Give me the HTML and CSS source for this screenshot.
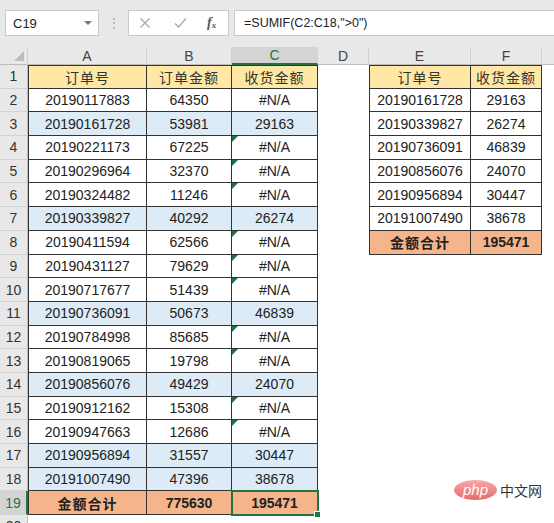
FILE: index.html
```html
<!DOCTYPE html>
<html>
<head>
<meta charset="utf-8">
<link rel="stylesheet" href="styles.css">
</head>
<body>
<div class="app">
  <div class="fbar">
    <div class="namebox"><span>C19</span><span class="dd"></span></div>
    <div class="sep">⋮</div>
    <div class="btns">
      <svg class="ic" width="12" height="12" viewBox="0 0 12 12"><path d="M1.5 1.5 L10.5 10.5 M10.5 1.5 L1.5 10.5" stroke="#a8a8a8" stroke-width="1.2" fill="none"/></svg>
      <svg class="ic ok" width="13" height="12" viewBox="0 0 13 12"><path d="M1 6.5 L4.5 10 L12 1.5" stroke="#a8a8a8" stroke-width="1.2" fill="none"/></svg>
      <span class="fx">f<sub>x</sub></span>
    </div>
    <div class="formula">=SUMIF(C2:C18,"&gt;0")</div>
  </div>
  <div class="sheet">
    <!-- header row -->
    <div class="cell ch corner"></div>
    <div class="cell ch">A</div>
    <div class="cell ch">B</div>
    <div class="cell ch chs">C</div>
    <div class="cell ch">D</div>
    <div class="cell ch">E</div>
    <div class="cell ch">F</div>
    <div class="cell ch last"></div>

    <!-- row 1 -->
    <div class="cell rh">1</div>
    <div class="cell t fc r1 hd">订单号</div>
    <div class="cell t r1 hd">订单金额</div>
    <div class="cell t r1 hd">收货金额</div>
    <div class="cell"></div>
    <div class="cell t fc r1 hd">订单号</div>
    <div class="cell t r1 hd">收货金额</div>
    <div class="cell"></div>

    <!-- row 2 -->
    <div class="cell rh">2</div>
    <div class="cell t fc">20190117883</div>
    <div class="cell t">64350</div>
    <div class="cell t">#N/A</div>
    <div class="cell"></div>
    <div class="cell t fc">20190161728</div>
    <div class="cell t">29163</div>
    <div class="cell"></div>

    <!-- row 3 -->
    <div class="cell rh">3</div>
    <div class="cell t fc bl">20190161728</div>
    <div class="cell t bl">53981</div>
    <div class="cell t bl">29163</div>
    <div class="cell"></div>
    <div class="cell t fc">20190339827</div>
    <div class="cell t">26274</div>
    <div class="cell"></div>

    <!-- row 4 -->
    <div class="cell rh">4</div>
    <div class="cell t fc">20190221173</div>
    <div class="cell t">67225</div>
    <div class="cell t tri">#N/A</div>
    <div class="cell"></div>
    <div class="cell t fc">20190736091</div>
    <div class="cell t">46839</div>
    <div class="cell"></div>

    <!-- row 5 -->
    <div class="cell rh">5</div>
    <div class="cell t fc">20190296964</div>
    <div class="cell t">32370</div>
    <div class="cell t tri">#N/A</div>
    <div class="cell"></div>
    <div class="cell t fc">20190856076</div>
    <div class="cell t">24070</div>
    <div class="cell"></div>

    <!-- row 6 -->
    <div class="cell rh">6</div>
    <div class="cell t fc">20190324482</div>
    <div class="cell t">11246</div>
    <div class="cell t tri">#N/A</div>
    <div class="cell"></div>
    <div class="cell t fc">20190956894</div>
    <div class="cell t">30447</div>
    <div class="cell"></div>

    <!-- row 7 -->
    <div class="cell rh">7</div>
    <div class="cell t fc bl">20190339827</div>
    <div class="cell t bl">40292</div>
    <div class="cell t bl">26274</div>
    <div class="cell"></div>
    <div class="cell t fc">20191007490</div>
    <div class="cell t">38678</div>
    <div class="cell"></div>

    <!-- row 8 -->
    <div class="cell rh">8</div>
    <div class="cell t fc">20190411594</div>
    <div class="cell t">62566</div>
    <div class="cell t tri">#N/A</div>
    <div class="cell"></div>
    <div class="cell t fc tot">金额合计</div>
    <div class="cell t tot">195471</div>
    <div class="cell"></div>

    <!-- row 9 -->
    <div class="cell rh">9</div>
    <div class="cell t fc">20190431127</div>
    <div class="cell t">79629</div>
    <div class="cell t tri">#N/A</div>
    <div class="cell"></div><div class="cell"></div><div class="cell"></div><div class="cell"></div>

    <!-- row 10 -->
    <div class="cell rh">10</div>
    <div class="cell t fc">20190717677</div>
    <div class="cell t">51439</div>
    <div class="cell t tri">#N/A</div>
    <div class="cell"></div><div class="cell"></div><div class="cell"></div><div class="cell"></div>

    <!-- row 11 -->
    <div class="cell rh">11</div>
    <div class="cell t fc bl">20190736091</div>
    <div class="cell t bl">50673</div>
    <div class="cell t bl">46839</div>
    <div class="cell"></div><div class="cell"></div><div class="cell"></div><div class="cell"></div>

    <!-- row 12 -->
    <div class="cell rh">12</div>
    <div class="cell t fc">20190784998</div>
    <div class="cell t">85685</div>
    <div class="cell t tri">#N/A</div>
    <div class="cell"></div><div class="cell"></div><div class="cell"></div><div class="cell"></div>

    <!-- row 13 -->
    <div class="cell rh">13</div>
    <div class="cell t fc">20190819065</div>
    <div class="cell t">19798</div>
    <div class="cell t tri">#N/A</div>
    <div class="cell"></div><div class="cell"></div><div class="cell"></div><div class="cell"></div>

    <!-- row 14 -->
    <div class="cell rh">14</div>
    <div class="cell t fc bl">20190856076</div>
    <div class="cell t bl">49429</div>
    <div class="cell t bl">24070</div>
    <div class="cell"></div><div class="cell"></div><div class="cell"></div><div class="cell"></div>

    <!-- row 15 -->
    <div class="cell rh">15</div>
    <div class="cell t fc">20190912162</div>
    <div class="cell t">15308</div>
    <div class="cell t tri">#N/A</div>
    <div class="cell"></div><div class="cell"></div><div class="cell"></div><div class="cell"></div>

    <!-- row 16 -->
    <div class="cell rh">16</div>
    <div class="cell t fc">20190947663</div>
    <div class="cell t">12686</div>
    <div class="cell t tri">#N/A</div>
    <div class="cell"></div><div class="cell"></div><div class="cell"></div><div class="cell"></div>

    <!-- row 17 -->
    <div class="cell rh">17</div>
    <div class="cell t fc bl">20190956894</div>
    <div class="cell t bl">31557</div>
    <div class="cell t bl">30447</div>
    <div class="cell"></div><div class="cell"></div><div class="cell"></div><div class="cell"></div>

    <!-- row 18 -->
    <div class="cell rh">18</div>
    <div class="cell t fc bl">20191007490</div>
    <div class="cell t bl">47396</div>
    <div class="cell t bl">38678</div>
    <div class="cell"></div><div class="cell"></div><div class="cell"></div><div class="cell"></div>

    <!-- row 19 -->
    <div class="cell rh rhs">19</div>
    <div class="cell t fc tot">金额合计</div>
    <div class="cell t tot">775630</div>
    <div class="cell t tot sel">195471</div>
    <div class="cell"></div><div class="cell"></div><div class="cell"></div><div class="cell"></div>

    <!-- row 20 -->
    <div class="cell rh top">20</div>
    <div class="cell"></div><div class="cell"></div><div class="cell"></div>
    <div class="cell"></div><div class="cell"></div><div class="cell"></div><div class="cell"></div>
  </div>
  <div class="wm"><span class="php">php</span><span class="zw">中文网</span></div>
</div>
</body>
</html>
```

FILE: styles.css
```css
body {
  margin: 0;
  background: #fff;
  font-family: "Liberation Sans", Arial, "Noto Sans CJK SC", sans-serif;
}
.app {
  position: relative;
  width: 554px;
  height: 523px;
  overflow: hidden;
}
.fbar {
  height: 47px;
  box-sizing: border-box;
  background: #e8e8e8;
  display: flex;
  align-items: flex-start;
  padding-top: 10px;
}
.namebox {
  margin-left: 5px;
  width: 94px;
  height: 26px;
  box-sizing: border-box;
  background: #fff;
  border: 1px solid #c9c9c9;
  display: flex;
  align-items: center;
  justify-content: space-between;
  padding: 0 6px 0 7px;
  font-size: 13px;
  color: #222;
}
.dd {
  width: 0;
  height: 0;
  border-left: 4px solid transparent;
  border-right: 4px solid transparent;
  border-top: 4px solid #777;
}
.sep {
  width: 29px;
  text-align: center;
  color: #b0b0b0;
  line-height: 26px;
  font-size: 14px;
}
.btns {
  width: 101px;
  height: 26px;
  box-sizing: border-box;
  background: #fff;
  border: 1px solid #c9c9c9;
  display: flex;
  align-items: center;
  padding-left: 10px;
}
.ic { display: block; }
.ok { margin-left: 23px; }
.fx {
  margin-left: 20px;
  font-family: "Liberation Serif", serif;
  font-style: italic;
  font-weight: bold;
  font-size: 14px;
  color: #555;
  line-height: 1;
}
.fx sub { font-size: 9px; vertical-align: -1px; }
.formula {
  margin-left: 5px;
  flex: 1;
  height: 26px;
  box-sizing: border-box;
  background: #fff;
  border: 1px solid #c9c9c9;
  border-right: none;
  padding-left: 9px;
  font-size: 12.5px;
  line-height: 24px;
  color: #222;
}
.sheet {
  display: grid;
  grid-template-columns: 28px 119px 85px 86px 51px 102px 71px 1fr;
  grid-template-rows: 18px repeat(19, 23.7px) 1fr;
  height: 476px;
}
.cell {
  box-sizing: border-box;
  display: flex;
  align-items: center;
  justify-content: center;
  font-size: 14px;
  color: #222;
  white-space: nowrap;
}
.ch {
  background: #e8e8e8;
  border-right: 1px solid #d2d2d2;
  border-bottom: 1px solid #bdbdbd;
  color: #444;
  font-size: 14px;
}
.ch.last { border-right: none; }
.chs {
  background: #d4d4d4;
  color: #217346;
  border-bottom: 2px solid #217346;
}
.corner { position: relative; }
.corner::after {
  content: "";
  position: absolute;
  right: 3px;
  bottom: 3px;
  border-left: 10px solid transparent;
  border-bottom: 10px solid #bdbdbd;
}
.rh {
  background: #e8e8e8;
  border-right: 1px solid #bdbdbd;
  border-bottom: 1px solid #d2d2d2;
  color: #333;
  font-size: 14px;
}
.rh.top { align-items: flex-start; padding-top: 3px; }
.rhs {
  background: #d4d4d4;
  color: #217346;
  border-right: 2px solid #217346;
}
.t {
  border-right: 1px solid #333;
  border-bottom: 1px solid #333;
}
.fc { border-left: 1px solid #333; }
.r1 { border-top: 1px solid #333; }
.hd {
  background: #fee8a4;
  font-family: "Noto Sans CJK SC", sans-serif;
  letter-spacing: 1px;
  color: #333;
}
.bl { background: #ddebf7; }
.tot {
  background: #f6b48a;
  font-weight: bold;
  color: #222;
}
.tot.fc { font-family: "Noto Sans CJK SC", sans-serif; letter-spacing: 1px; }
.tri { position: relative; }
.tri::before {
  content: "";
  position: absolute;
  left: 0;
  top: 0;
  border-top: 6px solid #1e7145;
  border-right: 6px solid transparent;
}
.sel {
  position: relative;
  z-index: 2;
  outline: 2px solid #217346;
  outline-offset: -1px;
}
.sel::after {
  content: "";
  position: absolute;
  right: -4px;
  bottom: -4px;
  width: 5px;
  height: 5px;
  background: #217346;
  border: 1px solid #fff;
}
.wm {
  position: absolute;
  left: 454px;
  top: 480px;
  display: flex;
  align-items: center;
  gap: 3px;
}
.php {
  width: 43px;
  height: 20px;
  border-radius: 50%;
  background: linear-gradient(#f7a9a9, #e86a6a);
  color: #fff;
  font-style: italic;
  font-size: 15px;
  line-height: 20px;
  text-align: center;
  font-family: "Liberation Sans", sans-serif;
}
.zw {
  font-size: 14px;
  color: #333;
  font-family: "Noto Sans CJK SC", sans-serif;
}
```
